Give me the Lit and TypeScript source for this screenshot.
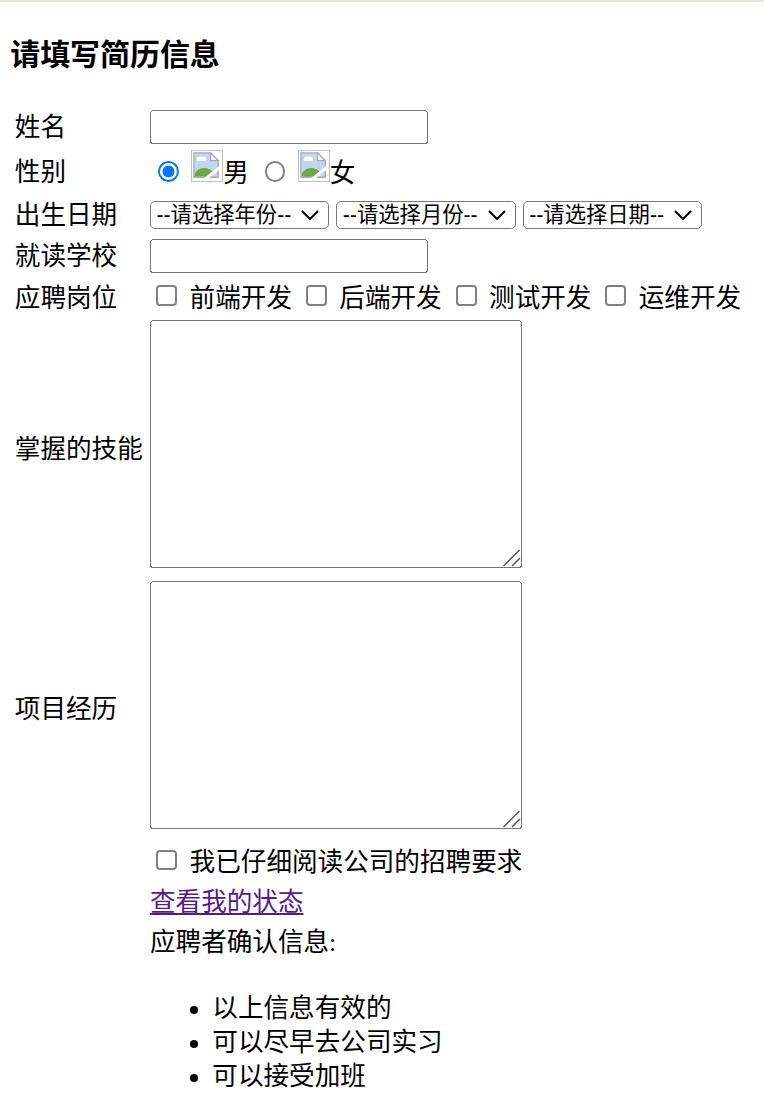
import { LitElement, html, css } from "lit";
import { customElement } from "lit/decorators.js";

const brokenImage = html`<span class="img"><svg viewBox="0 0 18 18" width="18" height="18" aria-hidden="true">
  <path d="M1.2 1.2H11.6L16.4 6V16.4H1.2Z" fill="#c3d5f3" stroke="#a9a9a9" stroke-width="0.8"/>
  <path d="M11.6 1.2V6H16.4Z" fill="#f4f4f4" stroke="#a9a9a9" stroke-width="0.7"/>
  <path d="M3.4 6.3a2 1.7 0 0 1 2.2-2.7a2.2 1.8 0 0 1 2.8 2.7Z" fill="#fff"/>
  <path d="M1.7 16V14C4.5 9.6 10 9.7 13 13L10 16Z" fill="#6fa944"/>
  <path d="M8.2 17.6L18 9.8" stroke="#fff" stroke-width="1.9" fill="none"/>
</svg></span>`;

const area = html`<span class="area"><textarea></textarea><svg class="grip" viewBox="0 0 20 20" aria-hidden="true">
  <path d="M1.5 18L17.5 2M10 18L18 10" fill="none" stroke="#555" stroke-width="1.5"/>
</svg></span>`;

@customElement("app-root")
export class AppRoot extends LitElement {
  static styles = css`
    :host {
      display: block;
      border-top: 2px solid #d9edd3;
      color: #000;
    }
    .page {
      zoom: 1.6;
      margin: 0 7px;
      font: 16px/21.25px "Liberation Serif", "Noto Sans CJK SC", serif;
    }
    h3 {
      font-size: 18.72px;
      font-weight: 700;
      line-height: 24px;
      margin: 21px 0 18.6px -0.6px;
    }
    table {
      border-spacing: 2px;
      white-space: nowrap;
    }
    td {
      padding: 1px;
    }
    td.label {
      line-height: 19px;
      padding: 3px 1.6px 0 0.4px;
    }
    .spaced {
      word-spacing: 0.8px;
    }
    td.jobs {
      padding: 2.2px 1px 0.4px;
    }
    td.agree {
      padding-top: 3px;
    }
    .dates {
      word-spacing: 0.5px;
    }
    input[type="text"] {
      box-sizing: border-box;
      width: 174px;
      height: 21px;
      margin: 0;
    }
    input[type="checkbox"],
    input[type="radio"] {
      appearance: none;
      box-sizing: border-box;
      width: 13px;
      height: 13px;
      border: 1.25px solid #808080;
      background: #fff;
    }
    input[type="checkbox"] {
      border-radius: 2.5px;
      vertical-align: -3px;
    }
    input[type="radio"] {
      border-radius: 50%;
    }
    input[type="radio"]:checked {
      border-color: #0075ff;
      background: radial-gradient(circle, #0075ff 0 3.5px, #fff 3.9px);
    }
    select {
      appearance: none;
      box-sizing: border-box;
      width: 112px;
      height: 18px;
      padding: 0 0 0 3.4px;
      border: 1px solid #767676;
      border-radius: 3px;
      font: 13.33px "Liberation Sans", "Noto Sans CJK SC", sans-serif;
      color: #000;
      background: #fff
        url("data:image/svg+xml,%3Csvg xmlns='http://www.w3.org/2000/svg' viewBox='0 0 18 10'%3E%3Cpath d='M1 1L9 9L17 1' fill='none' stroke='%23000' stroke-width='2'/%3E%3C/svg%3E")
        no-repeat right 5.5px center / 11.25px 6.25px;
      margin: 0;
    }
    .area {
      position: relative;
      display: block;
      width: 232.5px;
      margin-bottom: 4px;
    }
    textarea {
      box-sizing: border-box;
      display: block;
      width: 232.5px;
      height: 155px;
      margin: 0;
      resize: none;
    }
    .grip {
      position: absolute;
      right: 0;
      bottom: 0;
      width: 12.5px;
      height: 12.5px;
      pointer-events: none;
    }
    .img {
      display: inline-block;
      box-sizing: border-box;
      width: 20px;
      height: 20px;
      border: 1px solid #c0c0c0;
      vertical-align: baseline;
    }
    .img svg {
      display: block;
    }
    a {
      color: #551a8b;
    }
    ul {
      margin: 20px 0 0;
      padding-left: 39px;
    }
  `;

  render() {
    return html`
      <div class="page">
        <h3>请填写简历信息</h3>
        <table>
          <tbody>
            <tr>
              <td class="label">姓名</td>
              <td><input type="text" /></td>
            </tr>
            <tr>
              <td class="label">性别</td>
              <td class="spaced">
                <input type="radio" name="sex" checked /> ${brokenImage}男
                <input type="radio" name="sex" /> ${brokenImage}女
              </td>
            </tr>
            <tr>
              <td class="label">出生日期</td>
              <td class="dates">
                <select><option>--请选择年份--</option></select>
                <select><option>--请选择月份--</option></select>
                <select><option>--请选择日期--</option></select>
              </td>
            </tr>
            <tr>
              <td class="label">就读学校</td>
              <td><input type="text" /></td>
            </tr>
            <tr>
              <td class="label">应聘岗位</td>
              <td class="spaced jobs">
                <input type="checkbox" /> 前端开发
                <input type="checkbox" /> 后端开发
                <input type="checkbox" /> 测试开发
                <input type="checkbox" /> 运维开发
              </td>
            </tr>
            <tr>
              <td class="label">掌握的技能</td>
              <td>${area}</td>
            </tr>
            <tr>
              <td class="label">项目经历</td>
              <td>${area}</td>
            </tr>
            <tr>
              <td></td>
              <td class="spaced agree"><input type="checkbox" /> 我已仔细阅读公司的招聘要求</td>
            </tr>
            <tr>
              <td></td>
              <td><a href="#">查看我的状态</a></td>
            </tr>
            <tr>
              <td></td>
              <td>
                应聘者确认信息:
                <ul>
                  <li>以上信息有效的</li>
                  <li>可以尽早去公司实习</li>
                  <li>可以接受加班</li>
                </ul>
              </td>
            </tr>
          </tbody>
        </table>
      </div>
    `;
  }
}
